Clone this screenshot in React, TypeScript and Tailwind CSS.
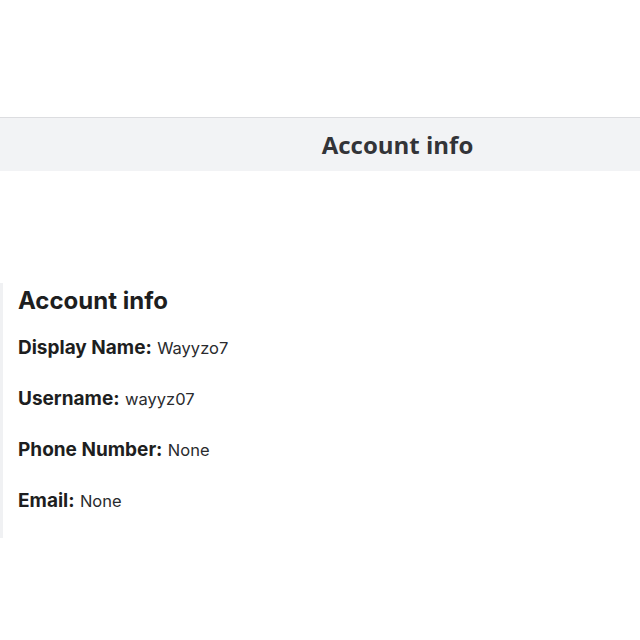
export default function App() {
  const rows = [
    { label: "Display Name:", value: "Wayyzo7" },
    { label: "Username:", value: "wayyz07" },
    { label: "Phone Number:", value: "None" },
    { label: "Email:", value: "None" },
  ];

  return (
    <div className="h-[640px] w-[640px] overflow-hidden bg-white">
      <div className="h-[117px]" />
      <header className="flex h-[54px] items-center border-t border-[#dcdde0] bg-[#f2f3f5] pl-[155px]">
        <h1 className="flex-1 text-center font-['Open_Sans',sans-serif] text-[24px] font-bold text-[#333438]">
          Account info
        </h1>
      </header>
      <div className="h-[112px]" />
      <section className="ml-0 w-[600px] border-l-[3px] border-[#f0f1f3] pb-[25px] pl-[15px] pt-[3px] font-['Inter',sans-serif] text-[#1d1e20]">
        <h2 className="text-[24px] leading-[30px] font-bold">Account info</h2>
        <div className="mt-[20px] flex flex-col gap-[27px]">
          {rows.map((row) => (
            <p key={row.label} className="text-[19px] leading-[24px]">
              <span className="font-bold">{row.label}</span>{" "}
              <span className="text-[16.5px] text-[#2a2b2e]">{row.value}</span>
            </p>
          ))}
        </div>
      </section>
    </div>
  );
}
